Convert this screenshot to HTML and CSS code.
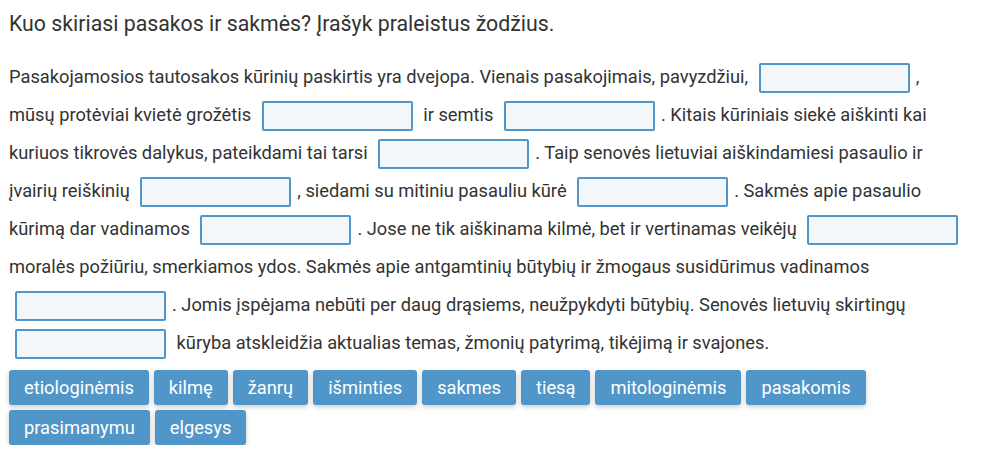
FILE: index.html
```html
<!DOCTYPE html>
<html lang="lt">
<head>
<meta charset="utf-8">
<link rel="stylesheet" href="styles.css">
</head>
<body>
<div class="task">
  <h1 class="title">Kuo skiriasi pasakos ir sakmės? Įrašyk praleistus žodžius.</h1>
  <p class="text">Pasakojamosios tautosakos kūrinių paskirtis yra dvejopa. Vienais pasakojimais, pavyzdžiui, <input class="gap" type="text">, mūsų protėviai kvietė grožėtis <input class="gap" type="text"> ir semtis <input class="gap" type="text">. Kitais kūriniais siekė aiškinti kai kuriuos tikrovės dalykus, pateikdami tai tarsi <input class="gap" type="text">. Taip senovės lietuviai aiškindamiesi pasaulio ir įvairių reiškinių <input class="gap" type="text">, siedami su mitiniu pasauliu kūrė <input class="gap" type="text">. Sakmės apie pasaulio kūrimą dar vadinamos <input class="gap" type="text">. Jose ne tik aiškinama kilmė, bet ir vertinamas veikėjų <input class="gap" type="text"> moralės požiūriu, smerkiamos ydos. Sakmės apie antgamtinių būtybių ir žmogaus susidūrimus vadinamos <input class="gap" type="text">. Jomis įspėjama nebūti per daug drąsiems, neužpykdyti būtybių. Senovės lietuvių skirtingų <input class="gap" type="text"> kūryba atskleidžia aktualias temas, žmonių patyrimą, tikėjimą ir svajones.</p>
  <div class="chips">
    <span class="chip">etiologinėmis</span>
    <span class="chip">kilmę</span>
    <span class="chip">žanrų</span>
    <span class="chip">išminties</span>
    <span class="chip">sakmes</span>
    <span class="chip">tiesą</span>
    <span class="chip">mitologinėmis</span>
    <span class="chip">pasakomis</span>
    <span class="chip">prasimanymu</span>
    <span class="chip">elgesys</span>
  </div>
</div>
</body>
</html>
```
FILE: styles.css
```css
html, body {
  margin: 0;
  padding: 0;
  background: #fff;
}
body {
  font-family: Roboto, "Noto Sans", sans-serif;
  color: #333;
}
.task {
  padding: 11px 15px 0 9px;
}
.title {
  margin: 0;
  font-size: 21.3px;
  font-weight: 400;
  line-height: 26px;
}
.text {
  margin: 21px 0 0 0;
  font-size: 18.3px;
  line-height: 38px;
}
.gap {
  box-sizing: border-box;
  width: 151px;
  height: 30px;
  margin: 0 6px;
  border: 2px solid #5096c8;
  border-radius: 2px;
  background: #f4f7fa;
  vertical-align: middle;
  font: inherit;
  padding: 0 6px;
}
.chips {
  display: flex;
  flex-wrap: wrap;
  gap: 5px 5px;
  margin-top: 8px;
}
.chip {
  display: block;
  height: 35px;
  line-height: 35px;
  padding: 0 15px;
  background: #5096c8;
  color: #fff;
  font-size: 18.3px;
  border-radius: 3px;
  box-shadow: 0 2px 5px rgba(0,0,0,0.2);
}
```
